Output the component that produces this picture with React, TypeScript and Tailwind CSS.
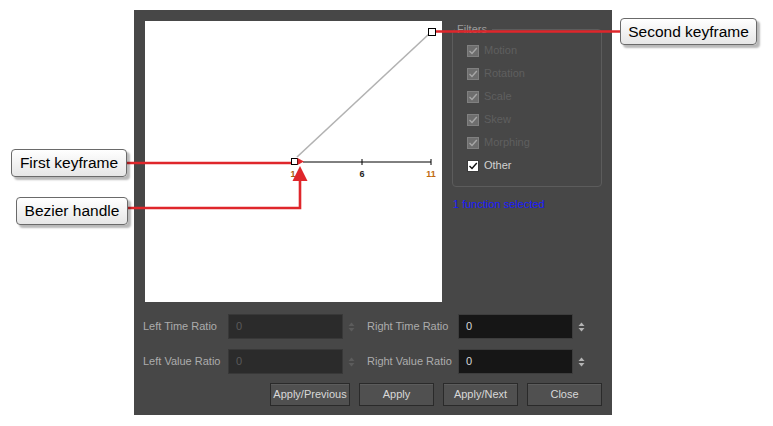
import React from "react";

const Spinner = ({ enabled }: { enabled: boolean }) => (
  <svg width="7" height="10" viewBox="0 0 7 10">
    <path d="M3.5 0.5 L6.5 4 L0.5 4 Z" fill={enabled ? "#b4b4b4" : "#5c5c5c"} />
    <path d="M3.5 9.5 L6.5 6 L0.5 6 Z" fill={enabled ? "#b4b4b4" : "#5c5c5c"} />
  </svg>
);

const Check = ({ color }: { color: string }) => (
  <svg width="10" height="10" viewBox="0 0 10 10">
    <path d="M1.5 5 L4 7.5 L8.8 2" fill="none" stroke={color} strokeWidth="1.4" />
  </svg>
);

const FilterRow = ({ label, enabled }: { label: string; enabled?: boolean }) => (
  <div className="h-[23px] flex items-center pl-[14px]">
    {enabled ? (
      <div className="w-[12px] h-[12px] bg-white border border-[#3a3a3a] flex items-center justify-center">
        <Check color="#111" />
      </div>
    ) : (
      <div className="w-[12px] h-[12px] bg-[#6e6e6e] border border-[#808080] flex items-center justify-center">
        <Check color="#a6a6a6" />
      </div>
    )}
    <span className={"ml-[5px] " + (enabled ? "text-[#d2d2d2]" : "text-[#5f5f5f]")}>{label}</span>
  </div>
);

const Input = ({ enabled }: { enabled: boolean }) => (
  <div
    className={
      "h-[25px] w-[115px] border flex items-center pl-[7px] " +
      (enabled
        ? "bg-[#161616] border-[#3d3d3d] text-[#d6d6d6]"
        : "bg-[#2b2b2b] border-[#383838] text-[#5a5a5a]")
    }
  >
    0
  </div>
);

const Btn = ({ label, w }: { label: string; w: string }) => (
  <button
    className={
      w +
      " h-[23px] bg-[#505050] border border-[#2a2a2a] text-[#d8d8d8] text-[11px] flex items-center justify-center shadow-[inset_0_1px_0_#5c5c5c]"
    }
  >
    {label}
  </button>
);

const Callout = ({ text, cls }: { text: string; cls: string }) => (
  <div
    className={
      "absolute flex items-center justify-center rounded-[4px] border-[1.5px] border-[#6a6a6a] bg-gradient-to-b from-white to-[#e6e6e6] shadow-[3px_3px_2px_rgba(0,0,0,0.28)] text-black text-[15.5px] [font-family:'Liberation_Sans',Arial,sans-serif] " +
      cls
    }
  >
    {text}
  </div>
);

export default function App() {
  return (
    <div className="relative w-[773px] h-[426px] bg-white overflow-hidden [font-family:'Liberation_Sans',Arial,sans-serif] text-[11px]">
      <div className="pt-[10px] pl-[134px]">
        <div className="w-[478px] h-[405px] bg-[#474747] flex flex-col pt-[11px] pl-[11px] pr-[10px]">
          <div className="flex h-[281px]">
            <div className="w-[297px] h-[281px] bg-white">
              <svg width="297" height="281" viewBox="0 0 297 281">
                <line x1="152" y1="136" x2="284" y2="13" stroke="#b2b2b2" strokeWidth="1.6" />
                <line x1="158" y1="141" x2="286" y2="141" stroke="#000" strokeWidth="1" />
                <line x1="217" y1="138" x2="217" y2="144" stroke="#000" strokeWidth="1" />
                <line x1="286" y1="138" x2="286" y2="144" stroke="#000" strokeWidth="1" />
                <rect x="146.5" y="137.5" width="6" height="6" fill="#fff" stroke="#000" strokeWidth="1" />
                <path d="M152.5 137 L159 140.5 L152.5 144 Z" fill="#e0282d" />
                <rect x="283.5" y="7.5" width="7" height="7" fill="#fff" stroke="#000" strokeWidth="1" />
                <text x="148" y="156" fontSize="9" fontWeight="bold" fill="#a85a10" textAnchor="middle">1</text>
                <text x="217" y="156" fontSize="9" fontWeight="bold" fill="#222" textAnchor="middle">6</text>
                <text x="286" y="156" fontSize="9" fontWeight="bold" fill="#c06a10" textAnchor="middle">11</text>
              </svg>
            </div>
            <div className="ml-[10px] w-[150px] flex flex-col">
              <fieldset className="mt-[2px] h-[164px] border border-[#5c5c5c] rounded-[4px]">
                <legend className="ml-[2px] pl-[2px] pr-[5px] text-[#9c9c9c] leading-[13px]">Filters</legend>
                <div className="pt-[3px]">
                  <FilterRow label="Motion" />
                  <FilterRow label="Rotation" />
                  <FilterRow label="Scale" />
                  <FilterRow label="Skew" />
                  <FilterRow label="Morphing" />
                  <FilterRow label="Other" enabled />
                </div>
              </fieldset>
              <div className="mt-[9px] ml-[1px] text-[#1a1aff]">1 function selected</div>
            </div>
          </div>
          <div className="mt-[12px] -ml-[2px] flex flex-col gap-[10px]">
            <div className="grid grid-cols-[85px_115px_24px_91px_115px_auto] items-center">
              <span className="text-[#acacac]">Left Time Ratio</span>
              <Input enabled={false} />
              <div className="pl-[5px] flex items-center"><Spinner enabled={false} /></div>
              <span className="text-[#acacac]">Right Time Ratio</span>
              <Input enabled />
              <div className="pl-[5px] flex items-center"><Spinner enabled /></div>
            </div>
            <div className="grid grid-cols-[85px_115px_24px_91px_115px_auto] items-center">
              <span className="text-[#acacac]">Left Value Ratio</span>
              <Input enabled={false} />
              <div className="pl-[5px] flex items-center"><Spinner enabled={false} /></div>
              <span className="text-[#acacac]">Right Value Ratio</span>
              <Input enabled />
              <div className="pl-[5px] flex items-center"><Spinner enabled /></div>
            </div>
          </div>
          <div className="mt-[9px] flex justify-end gap-[9px]">
            <Btn label="Apply/Previous" w="w-[80px]" />
            <Btn label="Apply" w="w-[75px]" />
            <Btn label="Apply/Next" w="w-[75px]" />
            <Btn label="Close" w="w-[75px]" />
          </div>
        </div>
      </div>

      <svg className="absolute inset-0 pointer-events-none" width="773" height="426" viewBox="0 0 773 426">
        <line x1="436" y1="31.5" x2="622" y2="31.5" stroke="#df262b" strokeWidth="2.6" />
        <line x1="125" y1="163" x2="291" y2="163" stroke="#df262b" strokeWidth="2.6" />
        <polyline points="126,208 300,208 300,180" fill="none" stroke="#df262b" strokeWidth="2.6" />
        <path d="M300 166 L307.5 181 L292.5 181 Z" fill="#df262b" />
      </svg>

      <Callout text="Second keyframe" cls="left-[620px] top-[18px] w-[137px] h-[27px]" />
      <Callout text="First keyframe" cls="left-[11px] top-[149px] w-[116px] h-[28px]" />
      <Callout text="Bezier handle" cls="left-[16px] top-[197px] w-[112px] h-[28px]" />
    </div>
  );
}
